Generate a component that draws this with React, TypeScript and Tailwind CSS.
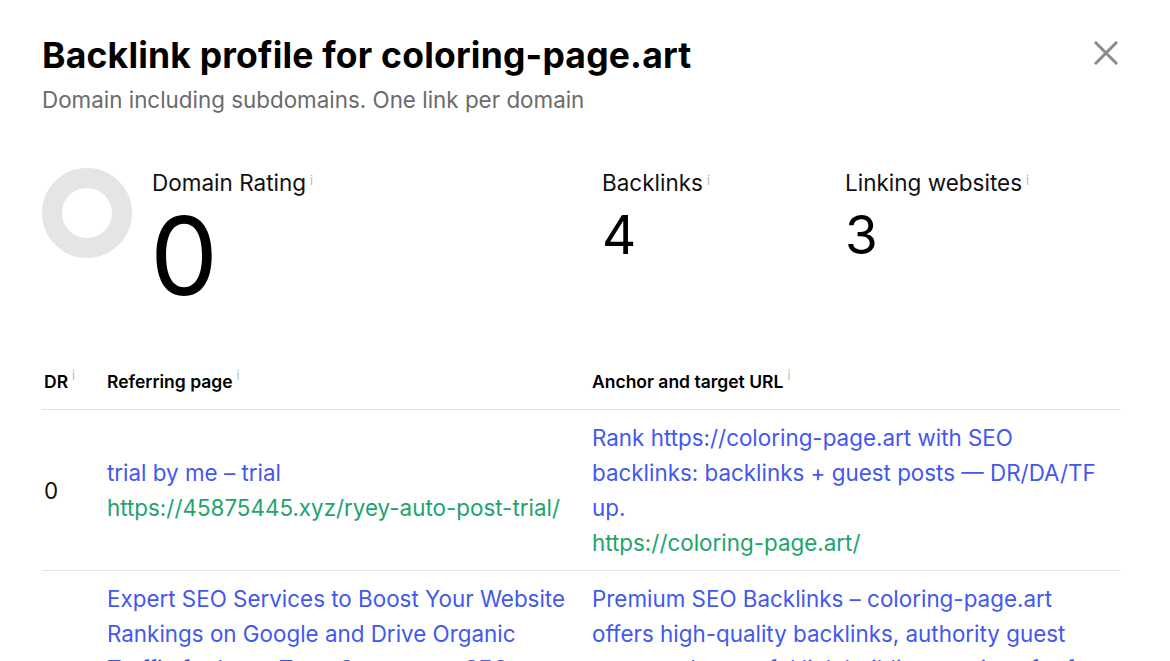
const blue = "text-[#4358ee]";
const green = "text-[#21a46c]";

function Info() {
  return <span className="ml-[4px] text-[13px] text-[#a8a8a8] font-light align-top relative top-[-3px]">i</span>;
}

function Stat({ label, value }: { label: string; value: string }) {
  return (
    <div className="flex flex-col">
      <div className="text-[22.5px] leading-[28px] text-[#111]">
        {label}
        <Info />
      </div>
      <div className="text-[53px] leading-[60px] text-black mt-[8px]">{value}</div>
    </div>
  );
}

export default function App() {
  return (
    <div className="w-[1170px] h-[661px] overflow-hidden bg-white font-['Inter',sans-serif] text-[#111]">
      <div className="pl-[42px] pr-[49px] pt-[34px] relative">
        <button className="absolute right-[52px] top-[41px] text-[#8a8a8a]">
          <svg width="24" height="24" viewBox="0 0 24 24" fill="none" stroke="currentColor" strokeWidth="3" strokeLinecap="square">
            <path d="M2 2 L22 22 M22 2 L2 22" />
          </svg>
        </button>
        <h1 className="text-[35.5px] leading-[44px] font-bold tracking-[0.2px] text-black">
          Backlink profile for coloring-page.art
        </h1>
        <p className="text-[22.4px] leading-[28px] text-[#6b6b6b] mt-[8px]">
          Domain including subdomains. One link per domain
        </p>

        <div className="flex mt-[55px] h-[187px]">
          <div className="w-[560px] flex">
            <div className="w-[90px] h-[90px] rounded-full border-[20px] border-[#e5e5e5] -mt-[1px]" />
            <div className="ml-[20px] flex flex-col">
              <div className="text-[22.5px] leading-[28px] text-[#111]">
                Domain Rating
                <Info />
              </div>
              <div className="text-[108px] leading-[100px] text-black mt-[9px] -ml-[2px]">0</div>
            </div>
          </div>
          <div className="w-[243px]">
            <Stat label="Backlinks" value="4" />
          </div>
          <Stat label="Linking websites" value="3" />
        </div>

        <div className="flex items-center h-[54px] border-b border-[#e3e3e3] text-[17.5px] font-semibold text-black">
          <div className="w-[65px] pl-[2px]">
            DR<Info />
          </div>
          <div className="w-[485px]">
            Referring page<Info />
          </div>
          <div className="flex-1">
            Anchor and target URL<Info />
          </div>
        </div>

        <div className="flex items-center py-[10px] border-b border-[#e3e3e3] text-[22.4px] leading-[35px]">
          <div className="w-[65px] pl-[2px]">0</div>
          <div className="w-[485px] pr-[12px]">
            <div className={blue}>trial by me – trial</div>
            <div className={green}>https://45875445.xyz/ryey-auto-post-trial/</div>
          </div>
          <div className="w-[515px]">
            <div className={blue}>
              Rank https://coloring-page.art with SEO backlinks: backlinks + guest posts — DR/DA/TF up.
            </div>
            <div className={green}>https://coloring-page.art/</div>
          </div>
        </div>

        <div className="flex items-start py-[10px] border-b border-[#e3e3e3] text-[22.4px] leading-[35px]">
          <div className="w-[65px] pl-[2px] self-center">0</div>
          <div className="w-[485px] pr-[12px]">
            <div className={blue}>
              Expert SEO Services to Boost Your Website Rankings on Google and Drive Organic Traffic for Long-Term Success — SEO Agency Results That Last, with guest posts and backlinks for every site
            </div>
            <div className={green}>https://45875445.xyz/expert-seo-services/</div>
          </div>
          <div className="w-[515px]">
            <div className={blue}>
              Premium SEO Backlinks – coloring-page.art offers high-quality backlinks, authority guest posts and powerful link building services for fast growth in every search engine.
            </div>
            <div className={green}>https://coloring-page.art/</div>
          </div>
        </div>
      </div>
    </div>
  );
}
